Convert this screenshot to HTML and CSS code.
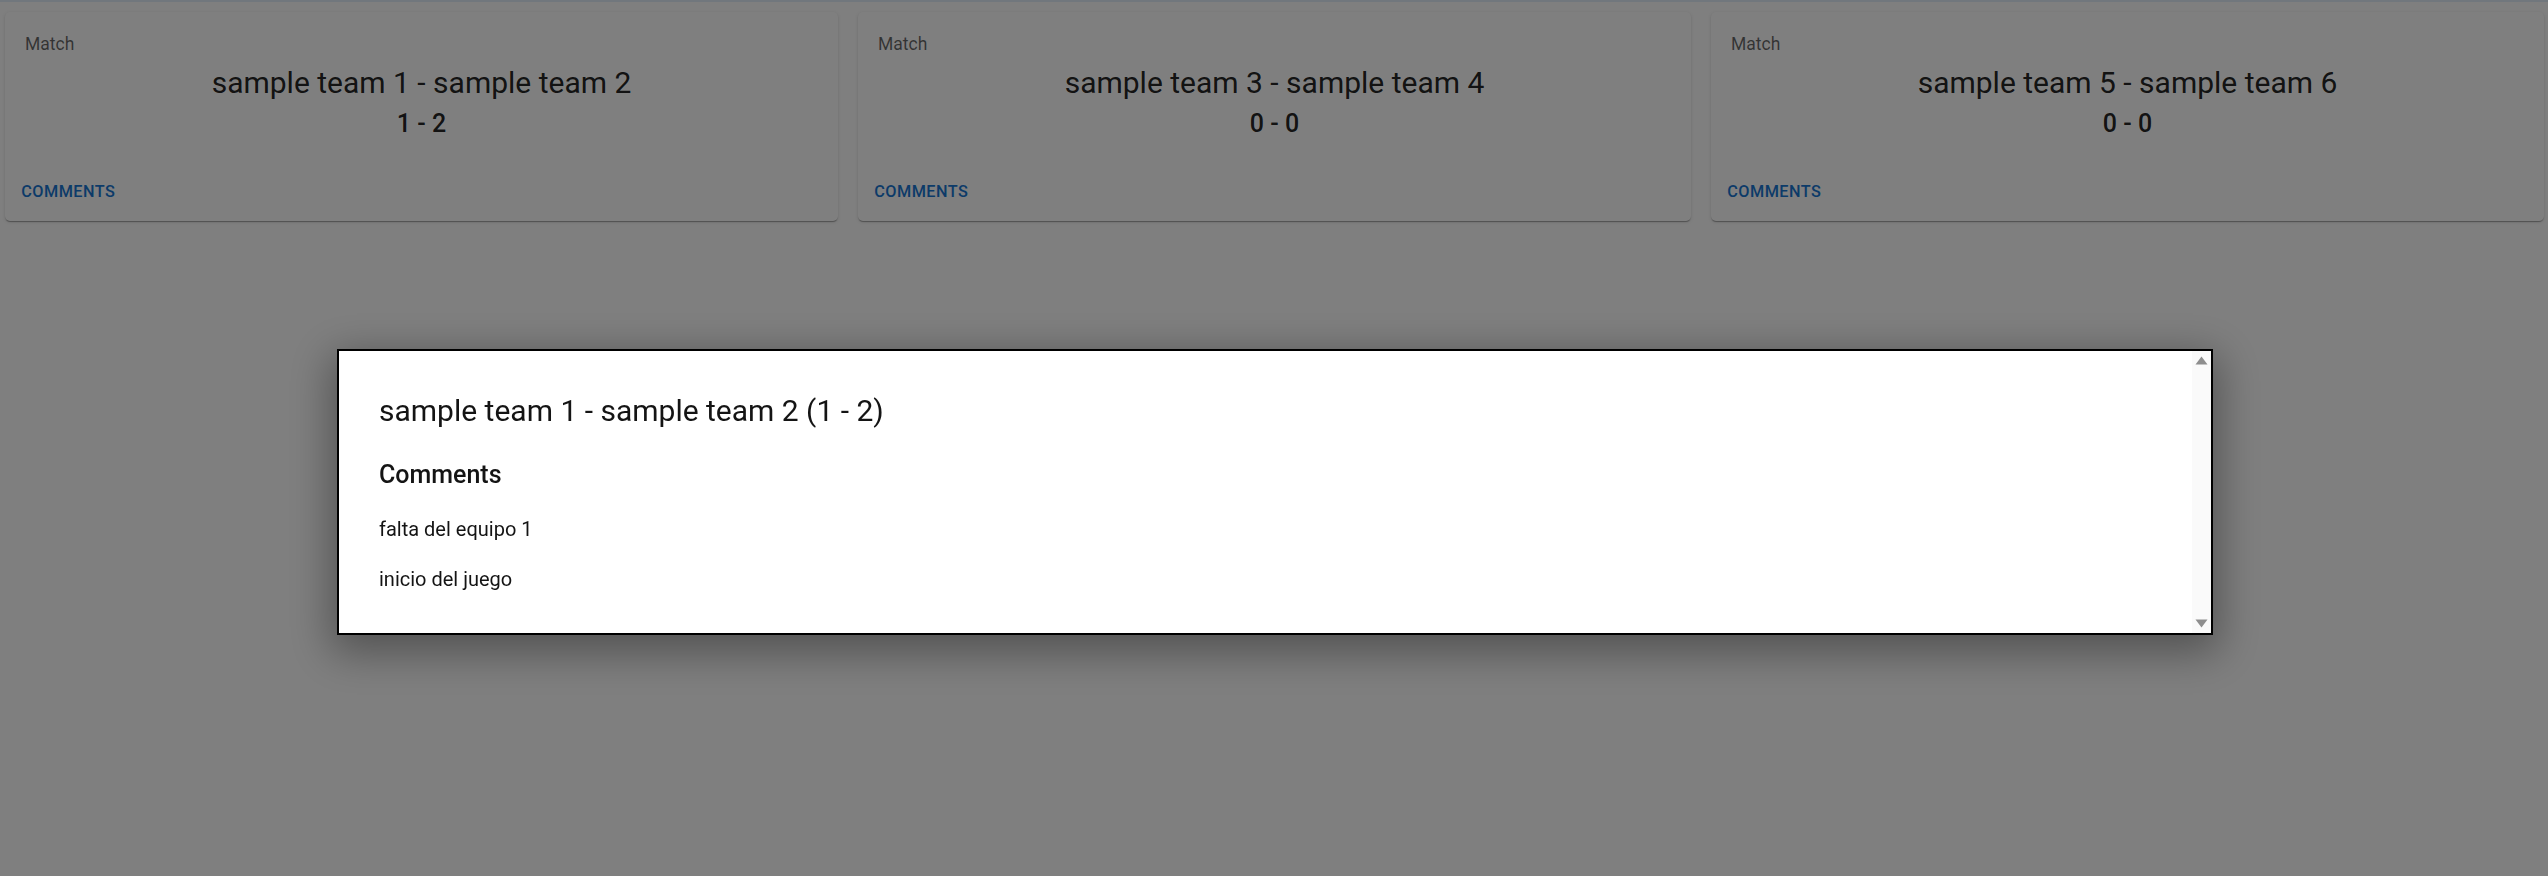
FILE: index.html
```html
<!DOCTYPE html>
<html lang="en">
<head>
<meta charset="utf-8">
<title>Matches</title>
<link rel="stylesheet" href="styles.css">
</head>
<body>
  <div class="topline"></div>
  <main class="grid">
    <article class="card">
      <div class="card-content">
        <div class="overline">Match</div>
        <h2 class="teams">sample team 1 - sample team 2</h2>
        <div class="score">1 - 2</div>
      </div>
      <div class="card-actions"><button class="btn">Comments</button></div>
    </article>
    <article class="card">
      <div class="card-content">
        <div class="overline">Match</div>
        <h2 class="teams">sample team 3 - sample team 4</h2>
        <div class="score">0 - 0</div>
      </div>
      <div class="card-actions"><button class="btn">Comments</button></div>
    </article>
    <article class="card">
      <div class="card-content">
        <div class="overline">Match</div>
        <h2 class="teams">sample team 5 - sample team 6</h2>
        <div class="score">0 - 0</div>
      </div>
      <div class="card-actions"><button class="btn">Comments</button></div>
    </article>
  </main>

  <div class="overlay">
    <div class="dialog">
      <div class="dialog-body">
        <h2 class="dialog-title">sample team 1 - sample team 2 (1 - 2)</h2>
        <h3 class="dialog-sub">Comments</h3>
        <p class="comment">falta del equipo 1</p>
        <p class="comment">inicio del juego</p>
      </div>
      <div class="scrollbar">
        <svg class="arrow" width="13" height="9" viewBox="0 0 13 9"><path d="M6.5 0.5 L12.5 8.5 L0.5 8.5 Z" fill="#8e8e8e"/></svg>
        <svg class="arrow" width="13" height="9" viewBox="0 0 13 9"><path d="M0.5 0.5 L12.5 0.5 L6.5 8.5 Z" fill="#8e8e8e"/></svg>
      </div>
    </div>
  </div>
</body>
</html>
```

FILE: styles.css
```css
* { box-sizing: border-box; }

html, body {
  margin: 0;
  padding: 0;
  background: #ffffff;
  font-family: Roboto, "Liberation Sans", Arial, sans-serif;
  width: 2548px;
  height: 876px;
  overflow: hidden;
}

.topline {
  height: 2px;
  background: #e2eefa;
}

.grid {
  display: grid;
  grid-template-columns: repeat(3, 1fr);
  gap: 20px;
  padding: 10px 4px 0 5px;
}

.card {
  background: #fff;
  border-radius: 5px;
  box-shadow: 0 2px 1px -1px rgba(0,0,0,0.2), 0 1px 1px 0 rgba(0,0,0,0.14), 0 1px 4px 0 rgba(0,0,0,0.12);
}

.card-content {
  padding: 20px 20px 19px;
}

.overline {
  font-size: 17.5px;
  line-height: 25px;
  color: rgba(0,0,0,0.6);
  margin-bottom: 6px;
}

.teams {
  margin: 0;
  font-size: 30px;
  line-height: 40px;
  font-weight: 400;
  text-align: center;
  color: rgba(0,0,0,0.87);
}

.score {
  margin-top: 1px;
  font-size: 25px;
  line-height: 40px;
  font-weight: 500;
  text-align: center;
  color: rgba(0,0,0,0.87);
}

.card-actions {
  padding: 10px;
  display: flex;
}

.btn {
  border: 0;
  background: transparent;
  font-family: Roboto, "Liberation Sans", Arial, sans-serif;
  font-size: 16.25px;
  line-height: 28.4px;
  font-weight: 500;
  letter-spacing: 0.46px;
  text-transform: uppercase;
  color: #1976d2;
  padding: 5px 6.25px;
  border-radius: 5px;
}

.overlay {
  position: fixed;
  inset: 0;
  background: rgba(0,0,0,0.5);
  display: flex;
  justify-content: center;
  align-items: flex-start;
  padding: 349px 0 0 2px;
}

.dialog {
  width: 1876px;
  height: 286px;
  background: #fff;
  border: 2px solid #000;
  display: flex;
  box-shadow: 0 12px 40px 6px rgba(0,0,0,0.35);
}

.dialog-body {
  flex: 1;
  padding: 40px;
  display: flex;
  flex-direction: column;
  color: rgba(0,0,0,0.92);
}

.dialog-title {
  margin: 0 0 24px;
  font-size: 30px;
  line-height: 40px;
  font-weight: 400;
}

.dialog-sub {
  margin: 0 0 19px;
  font-size: 25px;
  line-height: 40px;
  font-weight: 500;
}

.comment {
  margin: 0 0 20px;
  font-size: 20px;
  line-height: 30px;
}

.scrollbar {
  width: 19px;
  background: #fafafa;
  display: flex;
  flex-direction: column;
  justify-content: space-between;
  align-items: center;
  padding: 5px 0 5px;
}

.arrow { display: block; }
```
